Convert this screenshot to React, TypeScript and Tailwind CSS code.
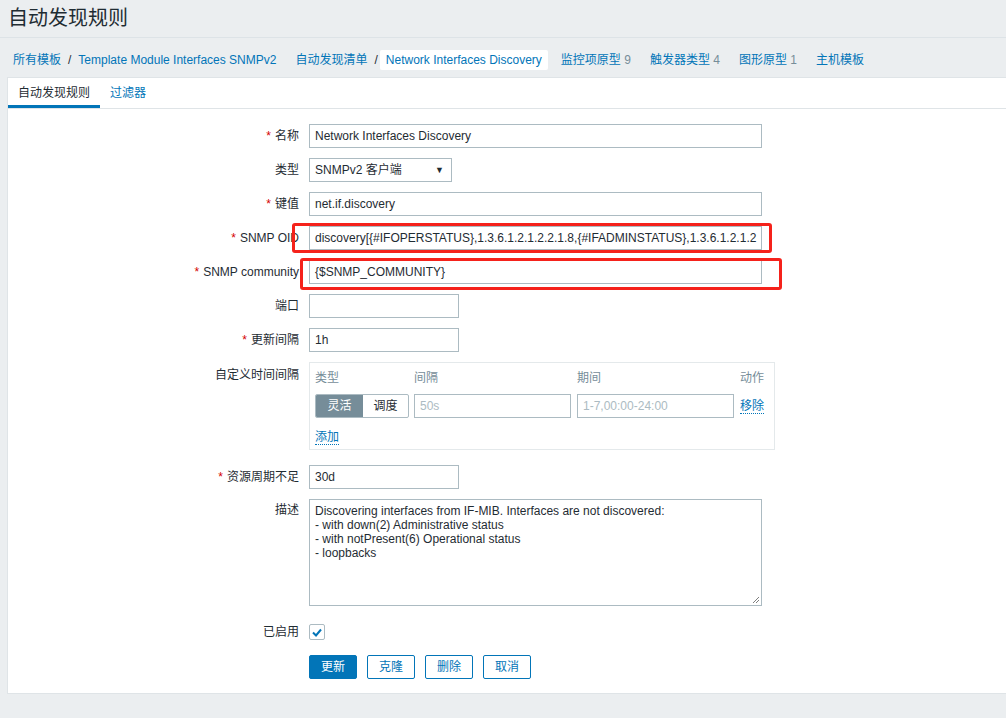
import React from "react";

const Label = ({ req, children }: { req?: boolean; children: React.ReactNode }) => (
  <div className="w-[291px] shrink-0 pr-0 text-right text-[12px] leading-[14px] text-[#1f2c33]">
    {req && <span className="mr-[4px] text-[#d40000]">*</span>}
    {children}
  </div>
);

const inputCls =
  "h-[24px] border border-[#acbbc2] bg-white px-[5px] text-[12px] leading-[22px] text-[#1f2c33] whitespace-nowrap overflow-hidden";

const Row = ({
  label,
  req,
  children,
}: {
  label: string;
  req?: boolean;
  children: React.ReactNode;
}) => (
  <div className="mb-[10px] flex h-[24px] items-center">
    <Label req={req}>{label}</Label>
    <div className="ml-[10px] flex items-center">{children}</div>
  </div>
);

export default function App() {
  return (
    <div className="relative min-h-[718px] w-full overflow-hidden bg-[#ebeef0] font-[Arial,'Liberation_Sans','Noto_Sans_CJK_SC',sans-serif] text-[#1f2c33]">
      {/* title */}
      <div className="flex h-[38px] items-center border-b border-[#dde3e7] px-[8px] pb-[1px] text-[20px] leading-[24px]">
        自动发现规则
      </div>

      {/* breadcrumbs */}
      <div className="flex h-[39px] items-center pt-[5px] pl-[13px] text-[12px] leading-[14px]">
        <span className="text-[#0275b8]">所有模板</span>
        <span className="mx-[7px]">/</span>
        <span className="text-[#0275b8]">Template Module Interfaces SNMPv2</span>
        <span className="ml-[19px] text-[#0275b8]">自动发现清单</span>
        <span className="ml-[7px] mr-[2px]">/</span>
        <span className="flex h-[20px] items-center rounded-[2px] bg-white px-[6px] text-[#0275b8]">
          Network Interfaces Discovery
        </span>
        <span className="ml-[13px] text-[#0275b8]">
          监控项原型 <span className="text-[#768d99]">9</span>
        </span>
        <span className="ml-[19px] text-[#0275b8]">
          触发器类型 <span className="text-[#768d99]">4</span>
        </span>
        <span className="ml-[19px] text-[#0275b8]">
          图形原型 <span className="text-[#768d99]">1</span>
        </span>
        <span className="ml-[19px] text-[#0275b8]">主机模板</span>
      </div>

      {/* panel */}
      <div className="ml-[7px] border-y border-l border-[#dfe4e7] bg-white">
        <div className="flex h-[31px] items-stretch border-b border-[#dfe4e7] text-[12px] leading-[14px]">
          <div className="flex w-[92px] items-center justify-center border-b-[3px] border-[#0275b8] pt-[3px]">
            自动发现规则
          </div>
          <div className="flex items-center px-[10px] text-[#0275b8]">过滤器</div>
        </div>

        <div className="pt-[15px] pb-[14px]">
          <Row label="名称" req>
            <div className={`${inputCls} w-[453px] border-[#1d5f8f]`}>Network Interfaces Discovery</div>
          </Row>
          <Row label="类型">
            <div className={`${inputCls} flex w-[143px] items-center justify-between`}>
              <span>SNMPv2 客户端</span>
              <span className="mr-[2px] text-[9px]">▼</span>
            </div>
          </Row>
          <Row label="键值" req>
            <div className={`${inputCls} w-[453px]`}>net.if.discovery</div>
          </Row>
          <Row label="SNMP OID" req>
            <div className={`${inputCls} w-[453px]`}>
              discovery[{"{"}#IFOPERSTATUS{"}"},1.3.6.1.2.1.2.2.1.8,{"{"}#IFADMINSTATUS{"}"},1.3.6.1.2.1.2
            </div>
          </Row>
          <Row label="SNMP community" req>
            <div className={`${inputCls} w-[453px]`}>{"{$SNMP_COMMUNITY}"}</div>
          </Row>
          <Row label="端口">
            <div className={`${inputCls} w-[150px]`}></div>
          </Row>
          <Row label="更新间隔" req>
            <div className={`${inputCls} w-[150px]`}>1h</div>
          </Row>

          {/* custom intervals */}
          <div className="mb-[15px] flex items-start">
            <div className="pt-[6px]">
              <Label>自定义时间间隔</Label>
            </div>
            <div className="ml-[10px] h-[88px] w-[466px] border border-[#e4e9eb] pt-[5px] pl-[5px] text-[12px] leading-[14px]">
              <div className="flex h-[20px] items-center text-[#768d99]">
                <span className="w-[94px]">类型</span>
                <span className="ml-[5px] w-[157px]">间隔</span>
                <span className="ml-[6px] w-[157px]">期间</span>
                <span className="ml-[6px]">动作</span>
              </div>
              <div className="mt-[6px] flex h-[24px] items-center">
                <div className="flex h-[24px] w-[94px] overflow-hidden rounded-[2px] border border-[#acbbc2]">
                  <span className="flex w-[47px] items-center justify-center bg-[#768d99] text-white">灵活</span>
                  <span className="flex flex-1 items-center justify-center">调度</span>
                </div>
                <div className={`${inputCls} ml-[5px] w-[157px] text-[#acbbc2]`}>50s</div>
                <div className={`${inputCls} ml-[6px] w-[157px] text-[#acbbc2]`}>1-7,00:00-24:00</div>
                <span className="ml-[6px] border-b border-dotted border-[#0275b8] text-[#0275b8]">移除</span>
              </div>
              <div className="mt-[12px]">
                <span className="border-b border-dotted border-[#0275b8] text-[#0275b8]">添加</span>
              </div>
            </div>
          </div>

          <Row label="资源周期不足" req>
            <div className={`${inputCls} w-[150px]`}>30d</div>
          </Row>

          <div className="mb-[18px] flex items-start">
            <div className="pt-[4px]">
              <Label>描述</Label>
            </div>
            <div className="relative ml-[10px] h-[107px] w-[453px] border border-[#acbbc2] px-[5px] pt-[4px] text-[12px] leading-[14px]">
              <div>Discovering interfaces from IF-MIB. Interfaces are not discovered:</div>
              <div>- with down(2) Administrative status</div>
              <div>- with notPresent(6) Operational status</div>
              <div>- loopbacks</div>
              <svg className="absolute right-[1px] bottom-[1px]" width="9" height="9" viewBox="0 0 9 9">
                <path d="M8 2 L2 8 M8 5 L5 8" stroke="#7f7f7f" strokeWidth="1" />
              </svg>
            </div>
          </div>

          <div className="mb-[15px] flex h-[16px] items-center">
            <Label>已启用</Label>
            <div className="ml-[10px] flex h-[16px] w-[16px] items-center justify-center rounded-[2px] border border-[#acbbc2]">
              <svg width="10" height="9" viewBox="0 0 10 9">
                <path d="M1 4.5 L4 7.5 L9 1.5" fill="none" stroke="#0275b8" strokeWidth="2" />
              </svg>
            </div>
          </div>

          <div className="flex items-center">
            <div className="w-[301px] shrink-0" />
            <div className="flex gap-[10px] text-[12px]">
              <button className="h-[24px] w-[48px] rounded-[2px] border border-[#0275b8] bg-[#0275b8] text-white">更新</button>
              <button className="h-[24px] w-[48px] rounded-[2px] border border-[#0275b8] bg-white text-[#0275b8]">克隆</button>
              <button className="h-[24px] w-[48px] rounded-[2px] border border-[#0275b8] bg-white text-[#0275b8]">删除</button>
              <button className="h-[24px] w-[48px] rounded-[2px] border border-[#0275b8] bg-white text-[#0275b8]">取消</button>
            </div>
          </div>
        </div>
      </div>

      {/* red annotation boxes */}
      <div className="pointer-events-none absolute top-[223px] left-[292px] h-[30px] w-[480px] rounded-[3px] border-[3px] border-[#f5221b]" />
      <div className="pointer-events-none absolute top-[258px] left-[300px] h-[32px] w-[482px] rounded-[3px] border-[3px] border-[#f5221b]" />
    </div>
  );
}
